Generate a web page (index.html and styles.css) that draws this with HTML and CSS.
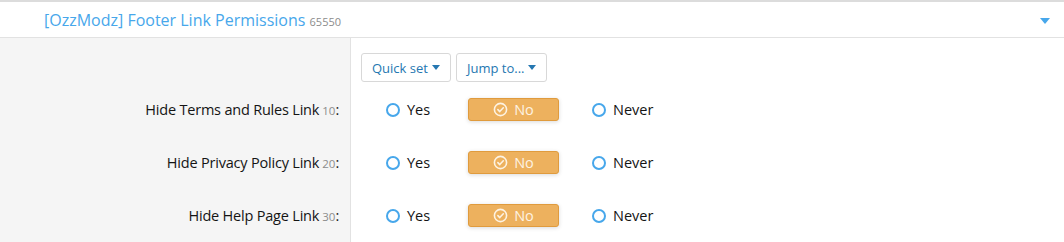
FILE: index.html
```html
<!DOCTYPE html>
<html lang="en">
<head>
  <meta charset="UTF-8">
  <title>Footer Link Permissions</title>
  <link rel="stylesheet" href="styles.css">
</head>
<body>

  <div class="block">
    <div class="block-header">
      <span class="title">[OzzModz] Footer Link Permissions <span class="addon-id">65550</span></span>
      <span class="toggle"></span>
    </div>

    <div class="row">
      <div class="label"></div>
      <div class="field buttons">
        <button class="menu-btn">Quick set <span class="caret"></span></button>
        <button class="menu-btn">Jump to... <span class="caret"></span></button>
      </div>
    </div>

    <div class="row">
      <div class="label">Hide Terms and Rules Link<span class="order">10</span>:</div>
      <div class="field choices">
        <label class="choice"><span class="radio"></span>Yes</label>
        <label class="choice on">
          <svg viewBox="0 0 16 16" width="15" height="15"><circle cx="8" cy="8" r="6.5" fill="none" stroke="currentColor" stroke-width="1.7"/><path d="M5.2 8.2l2 2 3.8-4" fill="none" stroke="currentColor" stroke-width="1.7" stroke-linecap="round" stroke-linejoin="round"/></svg>No
        </label>
        <label class="choice"><span class="radio"></span>Never</label>
      </div>
    </div>

    <div class="row">
      <div class="label">Hide Privacy Policy Link<span class="order">20</span>:</div>
      <div class="field choices">
        <label class="choice"><span class="radio"></span>Yes</label>
        <label class="choice on">
          <svg viewBox="0 0 16 16" width="15" height="15"><circle cx="8" cy="8" r="6.5" fill="none" stroke="currentColor" stroke-width="1.7"/><path d="M5.2 8.2l2 2 3.8-4" fill="none" stroke="currentColor" stroke-width="1.7" stroke-linecap="round" stroke-linejoin="round"/></svg>No
        </label>
        <label class="choice"><span class="radio"></span>Never</label>
      </div>
    </div>

    <div class="row">
      <div class="label">Hide Help Page Link<span class="order">30</span>:</div>
      <div class="field choices">
        <label class="choice"><span class="radio"></span>Yes</label>
        <label class="choice on">
          <svg viewBox="0 0 16 16" width="15" height="15"><circle cx="8" cy="8" r="6.5" fill="none" stroke="currentColor" stroke-width="1.7"/><path d="M5.2 8.2l2 2 3.8-4" fill="none" stroke="currentColor" stroke-width="1.7" stroke-linecap="round" stroke-linejoin="round"/></svg>No
        </label>
        <label class="choice"><span class="radio"></span>Never</label>
      </div>
    </div>
  </div>

</body>
</html>
```

FILE: styles.css
```css
* {
  margin: 0;
  padding: 0;
  box-sizing: border-box;
}

body {
  background-color: #ffffff;
  font-family: "Open Sans", "Noto Sans", sans-serif;
  font-size: 14px;
  color: #141414;
}

.block {
  border-top: 2px solid #dcdcdc;
}

.block-header {
  height: 36px;
  display: flex;
  align-items: center;
  justify-content: space-between;
  padding: 0 14px 0 44px;
  border-bottom: 1px solid #e2e2e2;
}

.title {
  color: #47a7eb;
  font-size: 16px;
}

.addon-id {
  color: #8c8c8c;
  font-size: 11px;
}

.toggle {
  width: 0;
  height: 0;
  border-left: 5px solid transparent;
  border-right: 5px solid transparent;
  border-top: 6px solid #47a7eb;
  margin-top: 2px;
}

.row {
  display: flex;
  height: 53px;
}

.row:nth-child(2) {
  height: 45px;
}

.label {
  width: 351px;
  flex-shrink: 0;
  background-color: #f5f5f5;
  border-right: 1px solid #e2e2e2;
  padding-right: 11px;
  display: flex;
  align-items: center;
  justify-content: flex-end;
  font-size: 14.5px;
  letter-spacing: -0.2px;
}

.order {
  color: #8c8c8c;
  font-size: 11.5px;
  margin-left: 3px;
  margin-top: 2px;
  letter-spacing: 0;
}

.field {
  padding-left: 10px;
  display: flex;
  align-items: center;
}

.buttons {
  align-items: flex-start;
  padding-top: 15px;
  gap: 5px;
}

.menu-btn {
  height: 29px;
  padding: 0 10px;
  border: 1px solid #d8d8d8;
  border-radius: 3px;
  background-color: #ffffff;
  color: #2577b1;
  font-family: inherit;
  font-size: 13px;
  display: flex;
  align-items: center;
  gap: 4px;
}

.caret {
  width: 0;
  height: 0;
  border-left: 4px solid transparent;
  border-right: 4px solid transparent;
  border-top: 5px solid #2577b1;
}

.choices {
  padding-left: 35px;
}

.choice {
  display: flex;
  align-items: center;
  width: 82px;
  height: 23px;
  font-size: 14.5px;
}

.radio {
  flex-shrink: 0;
  width: 14px;
  height: 14px;
  border: 2px solid #47a7eb;
  border-radius: 50%;
  margin-right: 7px;
}

.choice.on {
  width: 91px;
  margin-right: 33px;
  justify-content: center;
  gap: 6px;
  background-color: #edb15e;
  border: 1px solid #e09b3d;
  border-radius: 3px;
  color: #fdf3e3;
  box-shadow: 0 1px 4px rgba(0, 0, 0, 0.15);
}
```
